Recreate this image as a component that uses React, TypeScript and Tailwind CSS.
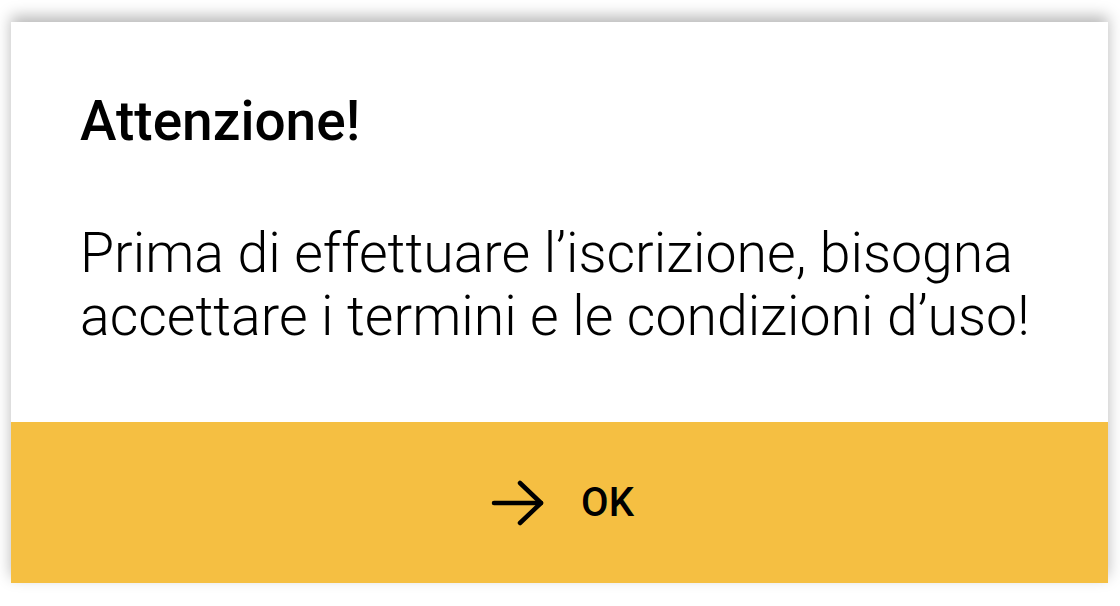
import React from "react";

export default function App() {
  return (
    <div className="w-[1120px] h-[606px] bg-white overflow-hidden pl-[11px] pt-[22px]" style={{ fontFamily: "Roboto, 'Noto Sans', sans-serif" }}>
      <div className="w-[1097px] h-[561px] flex flex-col bg-white shadow-[0_-6px_14px_rgba(0,0,0,0.28)]">
        <div className="h-[400px] pl-[69px] pt-[67px]">
          <h1 className="text-[55px] leading-[64px] font-medium text-black">Attenzione!</h1>
          <p className="mt-[69px] text-[55.4px] leading-[63px] font-light text-black">
            Prima di effettuare l’iscrizione, bisogna
            <br />
            accettare i termini e le condizioni d’uso!
          </p>
        </div>
        <div className="flex-1 bg-[#f5bf42] flex items-center justify-center gap-[36px] pl-[6px]">
          <svg width="54" height="46" viewBox="0 0 54 46" fill="none" stroke="#000" strokeWidth="4.5" strokeLinecap="round" strokeLinejoin="round">
            <path d="M3 23h47" />
            <path d="M29 3l21 20-21 20" />
          </svg>
          <span className="text-[40px] font-medium text-black leading-none">OK</span>
        </div>
      </div>
    </div>
  );
}
